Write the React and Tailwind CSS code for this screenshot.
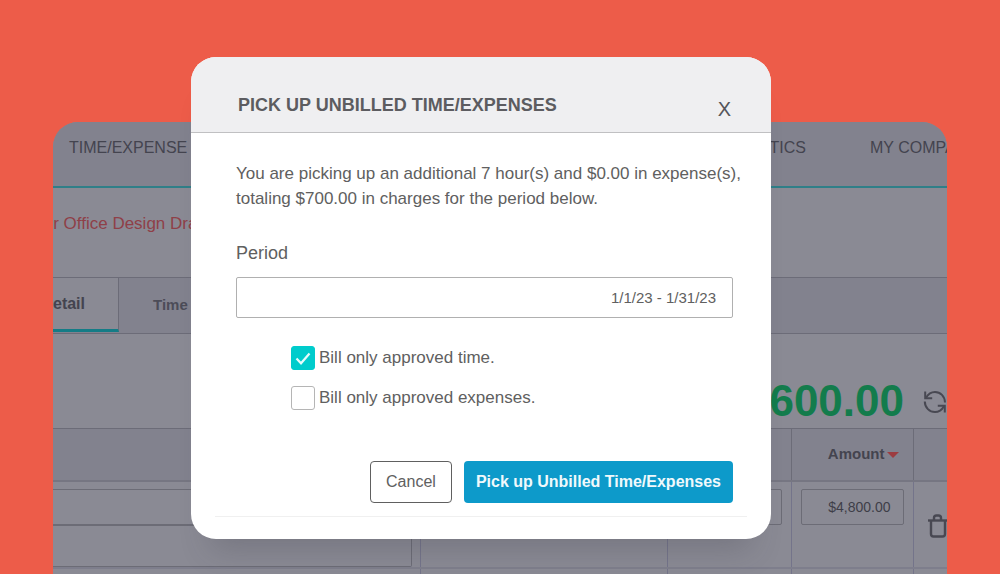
import { useState } from "react";

const RefreshIcon = () => (
  <svg width="24" height="24" viewBox="0 0 24 24" fill="none" stroke="#484852" strokeWidth="2">
    <path d="M2.2 1.500v6.700h7" />
    <path d="M3 7.800C5 4.400 8.200 2 12 2c5.400 0 9.800 4.200 10 10.500" />
    <path d="M21.800 22.500v-6.700h-7" />
    <path d="M21 16.200C19 19.600 15.800 22 12 22 6.600 22 1.800 17.800 1.800 11.500" />
  </svg>
);

const TrashIcon = () => (
  <svg width="20" height="24" viewBox="0 0 20 24" fill="none" stroke="#484852" strokeWidth="2.4">
    <path d="M0 6.500h20" />
    <path d="M6 6V4C6 2.500 7 1.500 8.500 1.500h2C12 1.500 13 2.500 13 4v2" />
    <path d="M3 6.500v13.500C3 21.600 3.800 22.500 5.500 22.500h9c1.700 0 2.500-.9 2.500-2.500V6.500" />
  </svg>
);

const CheckRow = ({ id, label, checked, onChange }) => (
  <div className="flex items-center gap-1">
    <span className="relative flex">
      <input
        id={id}
        type="checkbox"
        checked={checked}
        onChange={onChange}
        className="peer size-6 appearance-none rounded-[3px] border border-[#b5b5b5] bg-white checked:border-[#00cccc] checked:bg-[#00cccc]"
      />
      <svg
        className="pointer-events-none absolute inset-0 hidden peer-checked:block"
        width="24"
        height="24"
        viewBox="0 0 24 24"
        fill="none"
        stroke="#e8fbfb"
        strokeWidth="2.2"
      >
        <path d="M5.500 12.500l4.500 4.800L18.500 7.500" />
      </svg>
    </span>
    <label htmlFor={id} className="text-[17px] leading-6">
      {label}
    </label>
  </div>
);

// invoice page that sits behind the dialog
const InvoicePage = () => {
  return (
    <div className="mx-[53px] mt-[122px] overflow-hidden rounded-t-[25px] bg-[#8a8a94] text-[#44444f]">
      <nav className="flex h-[66px] justify-between border-b-2 border-[#2f7f88] bg-[#82828e] pl-4 pt-3.5 text-base leading-6 whitespace-nowrap">
        <a href="#time">TIME/EXPENSE</a>
        <div className="flex gap-16">
          <a href="#analytics">ANALYTICS</a>
          <a href="#company" className="w-[77px]">
            MY COMPANY
          </a>
        </div>
      </nav>

      <div className="flex h-[89px] items-center pb-[18px] text-[17px] text-[#8f4048]">
        <h1 className="-ml-3.5 whitespace-nowrap">for Office Design Drawings</h1>
      </div>

      <div className="flex h-[57px] border-y border-[#6c6c78] bg-[#82828e] font-bold">
        <button className="flex h-[54px] w-[66px] items-center justify-end border-r border-b-3 border-r-[#6c6c78] border-b-[#147c86] bg-[#8a8a94] pr-[33px] text-base">
          Detail
        </button>
        <button className="h-[54px] px-[34px] text-[15px] text-[#4c4c58]">Time</button>
      </div>

      <div className="flex h-[94px] items-end justify-end gap-[19px] pb-[3px]">
        <span className="text-[44px] leading-12 font-bold text-[#137c4c]">$600.00</span>
        <button aria-label="Refresh" className="mb-[11px] w-6">
          <RefreshIcon />
        </button>
      </div>

      <table className="w-full table-fixed border-collapse">
        <thead>
          <tr className="h-[52px] border-t border-b-2 border-t-[#6c6c78] border-b-[#767682] bg-[#82828e]">
            <th />
            <th className="w-[247px] border-l border-[#74748a]" />
            <th className="w-[124px] border-x border-[#6c6c78]" />
            <th className="w-[122px] border-x border-[#6c6c78] pr-3.5 text-right text-[15px]">
              Amount
              <span className="ml-0.5 inline-block border-x-6 border-t-6 border-x-transparent border-t-[#9c3c40] align-middle" />
            </th>
            <th className="w-[34px]" />
          </tr>
        </thead>
        <tbody>
          <tr className="h-[87px] border-b-2 border-[#7e7e8c] align-top">
            <td className="pt-[7px] pr-2">
              <input aria-label="Item" className="block h-9 w-full border-y border-[#6c6c76]" />
              <textarea
                aria-label="Description"
                className="block h-[42px] w-full resize-none rounded-r-xs border border-l-0 border-[#6c6c76]"
              />
            </td>
            <td className="border-l border-[#74748a]" />
            <td className="border-x border-[#74748a] px-[9px] pt-[7px]">
              <input aria-label="Rate" className="block h-9 w-full rounded-xs border border-[#6c6c76]" />
            </td>
            <td className="border-x border-[#74748a] px-[9px] pt-[7px]">
              <input
                aria-label="Amount"
                defaultValue="$4,800.00"
                className="block h-9 w-full rounded-xs border border-[#6c6c76] pr-3 text-right text-[14px] text-[#3e3e48]"
              />
            </td>
            <td className="pt-8 pl-3.5">
              <button aria-label="Delete" className="block w-5">
                <TrashIcon />
              </button>
            </td>
          </tr>
          <tr className="h-[88px]">
            <td />
            <td className="border-l border-[#74748a]" />
            <td className="border-x border-[#74748a]" />
            <td className="border-x border-[#74748a]" />
            <td />
          </tr>
        </tbody>
      </table>
    </div>
  );
};

const App = () => {
  const [period, setPeriod] = useState("1/1/23 - 1/31/23");
  const [approvedTime, setApprovedTime] = useState(true);
  const [approvedExpenses, setApprovedExpenses] = useState(false);

  return (
    <div className="relative h-screen overflow-hidden bg-[#ed5c49] font-['Liberation_Sans',Arial,sans-serif]">
      <InvoicePage />

      {/* Dialog */}
      <div className="absolute inset-0 flex justify-center pt-[57px] pr-[38px]">
        <div
          role="dialog"
          aria-labelledby="dialog-title"
          className="w-[580px] self-start overflow-hidden rounded-[25px] bg-white text-[#606060] shadow-[0_30px_30px_-20px_rgba(60,60,70,0.25)]"
        >
          <div className="flex items-start justify-between border-b border-[#c0c0c2] bg-[#efeff1] pt-9 pr-10 pb-[11px] pl-[47px]">
            <h2 id="dialog-title" className="text-lg leading-6 font-bold text-[#5c5c60]">
              PICK UP UNBILLED TIME/EXPENSES
            </h2>
            <button aria-label="Close" className="mt-1 text-xl leading-6 text-[#55555a]">
              X
            </button>
          </div>

          <div className="px-[38px] pt-7 pl-[45px]">
            <p className="text-[17px] leading-[25px] whitespace-nowrap">
              You are picking up an additional 7 hour(s) and $0.00 in expense(s),
              <br />
              totaling $700.00 in charges for the period below.
            </p>

            <label htmlFor="period" className="mt-[30px] block text-lg leading-6">
              Period
            </label>
            <input
              id="period"
              value={period}
              onChange={(e) => setPeriod(e.target.value)}
              className="mt-3 block h-[41px] w-full rounded-xs border border-[#b0b0b0] pr-4 text-right text-[15px]"
            />

            <div className="mt-7 ml-[55px] space-y-4">
              <CheckRow
                id="approved-time"
                label="Bill only approved time."
                checked={approvedTime}
                onChange={() => setApprovedTime(!approvedTime)}
              />
              <CheckRow
                id="approved-expenses"
                label="Bill only approved expenses."
                checked={approvedExpenses}
                onChange={() => setApprovedExpenses(!approvedExpenses)}
              />
            </div>

            <div className="mt-[51px] flex justify-end gap-3">
              <button className="h-[42px] rounded-sm border border-[#606060] px-[15px] text-base">
                Cancel
              </button>
              <button className="h-[42px] rounded-sm bg-[#0d9aca] px-3 text-base font-bold text-[#f0f9fc]">
                Pick up Unbilled Time/Expenses
              </button>
            </div>
          </div>

          <hr className="mx-6 mt-[13px] mb-[22px] border-[#f0f0f0]" />
        </div>
      </div>
    </div>
  );
};

export default App;
